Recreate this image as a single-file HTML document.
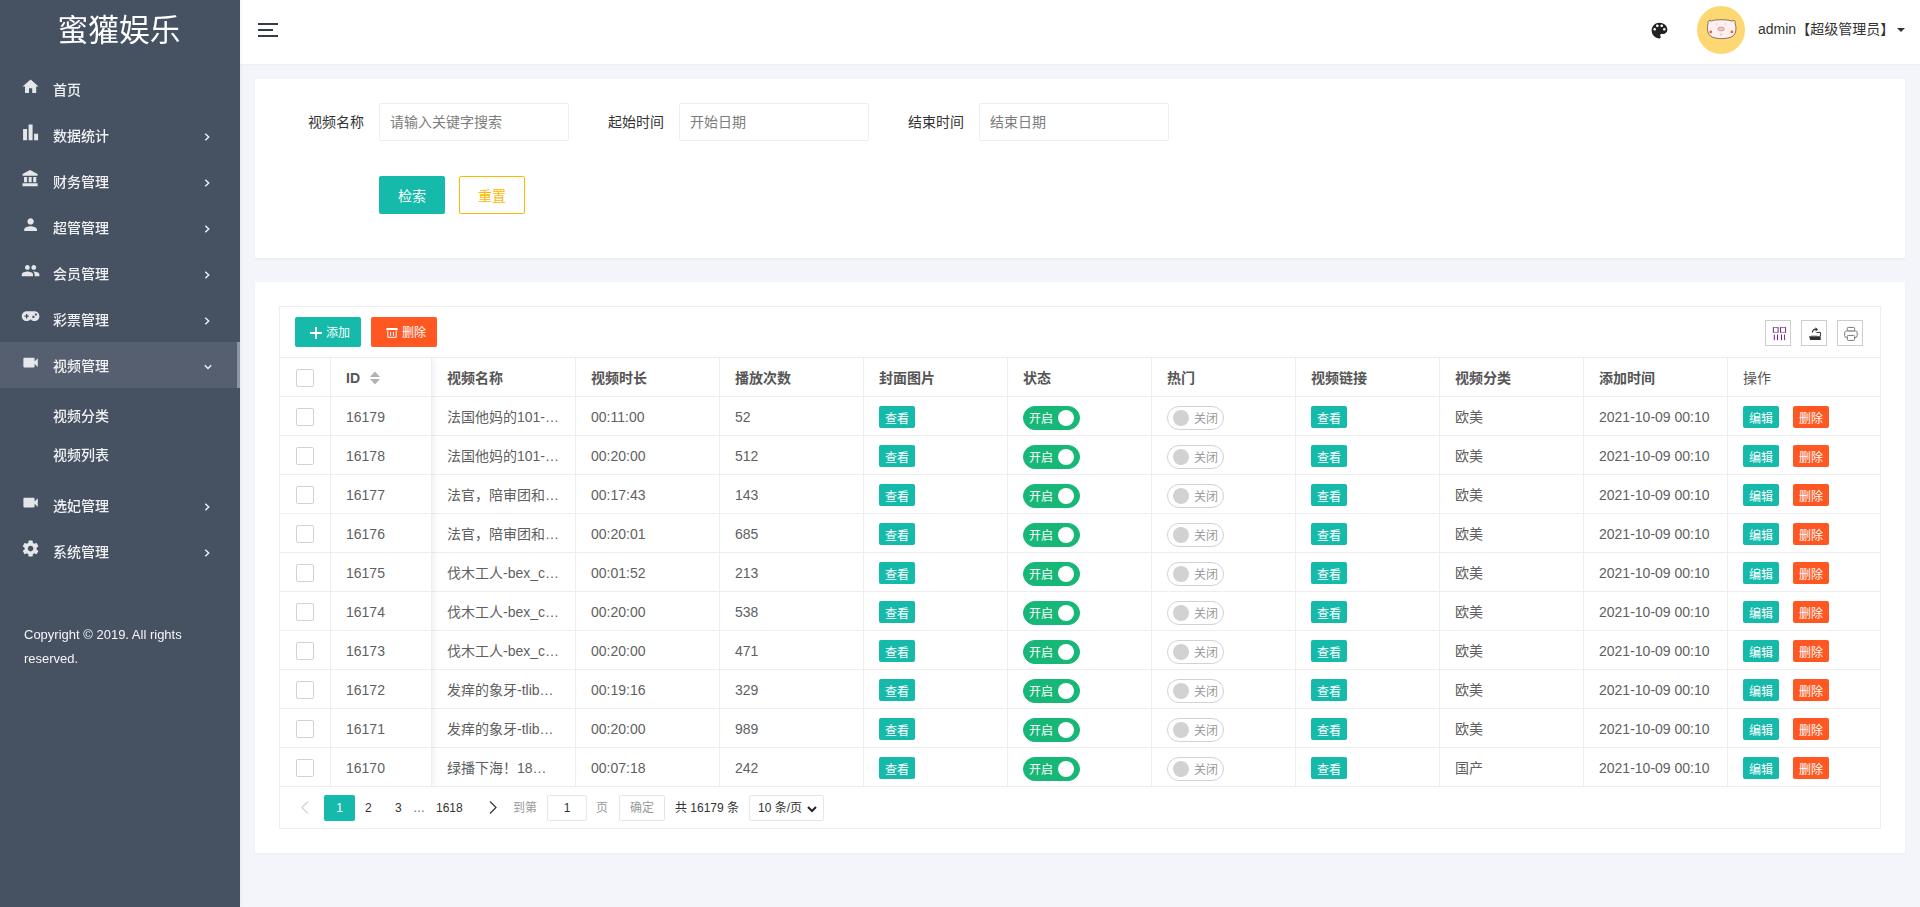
<!DOCTYPE html>
<html lang="zh-CN">
<head>
<meta charset="utf-8">
<title>蜜獾娱乐</title>
<style>
*{box-sizing:border-box;margin:0;padding:0}
html,body{width:1920px;height:907px;overflow:hidden}
body{font-family:"Liberation Sans","Noto Sans CJK SC",sans-serif;font-size:14px;color:#333;background:#f4f5fa;position:relative}
i{font-style:normal}
/* sidebar */
#side{position:absolute;left:0;top:0;width:240px;height:907px;background:#465162;color:#fff;box-shadow:1px 0 4px rgba(0,21,41,.05);z-index:5}
#logo{position:absolute;left:-1px;top:0;width:240px;height:60px;line-height:61px;text-align:center;font-size:30.700px;color:#fff;font-weight:400}
.mi{position:absolute;left:0;width:240px;height:46px;line-height:46px;color:rgba(255,255,255,.92);font-size:14px}
.mi.act{background:#565f6f}
.mi.act:after{content:"";position:absolute;right:0;top:0;width:3px;height:46px;background:#8d95a3}
.mi .tx{position:absolute;left:53px;top:1px;font-weight:500}
#sin{position:absolute;left:0;top:0;width:240px;height:907px;will-change:transform}
.mi svg.ic{position:absolute;left:20.600px;top:10.700px;width:19.200px;height:19.200px;fill:rgba(255,255,255,.86)}
.mi svg.ar{position:absolute;left:203px;top:20.500px;width:8px;height:8px;fill:none;stroke:rgba(255,255,255,.9);stroke-width:1.500}
.mi svg.ar.dn{left:203.500px;top:21px}
.sub{position:absolute;left:53px;height:39px;line-height:39px;color:rgba(255,255,255,.92);font-size:14px;font-weight:500}
#copy{position:absolute;left:24px;top:623px;width:192px;font-size:13px;line-height:24px;color:rgba(255,255,255,.95)}
/* header */
#hd{position:absolute;left:240px;top:0;width:1680px;height:64px;background:#fff;box-shadow:0 1px 3px rgba(0,21,41,.04)}
#burger{position:absolute;left:18px;top:23px;width:20px;height:14px}
#pal{position:absolute;left:1409px;top:19.900px;width:21px;height:21px}
#avatar{position:absolute;left:1457px;top:6px;width:48px;height:48px;border-radius:50%;background:#fdd771;overflow:hidden}
#user{position:absolute;left:1518px;top:0;height:58px;line-height:58px;font-size:14px;color:#333;white-space:nowrap}
#caret{position:absolute;left:1657px;top:28px;width:8px;height:4px}
/* cards */
.card{position:absolute;left:255px;width:1650px;background:#fff;box-shadow:0 1px 2px 0 rgba(0,0,0,.05)}
#c1{top:79px;height:179px}
#c2{top:282px;height:571px}
.lab{position:absolute;top:24px;height:38px;line-height:38px;font-size:14px;color:#333;text-align:right;width:109px}
.inp{position:absolute;top:24px;width:190px;height:38px;border:1px solid #eee;border-radius:2px;line-height:36px;padding-left:10px;color:#7d7d7d;font-size:14px;background:#fff}
.btn{position:absolute;height:38px;line-height:40px;text-align:center;font-size:14px;border-radius:2px}
/* table */
#tb{position:absolute;left:24px;top:24px;width:1602px;height:523px;border:1px solid #eee}
#tool{position:absolute;left:0;top:0;width:1600px;height:51px;border-bottom:1px solid #eee}
.tbtn{position:absolute;top:10px;height:30px;line-height:30px;color:#fff;font-size:12px;border-radius:2px;text-align:center}
.tic{position:absolute;top:13px;width:26px;height:26px;border:1px solid #ccc}
.tic svg{display:block}
table{position:absolute;left:0;top:51px;border-collapse:separate;border-spacing:0;table-layout:fixed;width:1600px}
th,td{height:39px;border-right:1px solid #eee;border-bottom:1px solid #eee;padding:0 15px;text-align:left;font-size:14px;color:#5f5f5f;white-space:nowrap;overflow:hidden;font-weight:400}
th{color:#555;font-weight:700}
th.op{font-weight:400}
th:last-child,td:last-child{border-right:0}
td.c,th.c{padding:0}
.cb{display:block;width:18px;height:18px;border:1px solid #d2d2d2;border-radius:2px;background:#fff;margin:1px auto 0}
.sort{vertical-align:-2px;margin-left:6px}
td.l,th.l{padding-top:2px}
.b{display:inline-block;position:relative;top:1px;width:36px;height:22px;line-height:26px;text-align:center;font-size:12px;color:#fff;border-radius:2px;vertical-align:middle}
.g{background:#16baaa}
.r{background:#ff5722}
.sw{display:inline-block;position:relative;top:2px;height:24px;width:57px;border-radius:12px;vertical-align:middle;font-size:12px;line-height:22px}
.sw.on{background:#16b777;border:1px solid #16b777;color:#fff}
.sw.on i{position:absolute;right:5px;top:3px;width:16px;height:16px;border-radius:50%;background:#fff}
.sw.on span{position:absolute;left:5px;top:1px}
.sw.off{background:#fff;border:1px solid #d2d2d2;color:#999}
.sw.off i{position:absolute;left:5px;top:3px;width:16px;height:16px;border-radius:50%;background:#d2d2d2}
.sw.off span{position:absolute;right:5px;top:1px}
#fxl{position:absolute;left:0;top:51px;width:1600px;height:429px;overflow:hidden;pointer-events:none}
#fxl div{position:absolute;left:0;top:0;width:152px;height:429px;box-shadow:1px 0 8px rgba(0,0,0,.08)}
#pg{position:absolute;left:0;top:480px;width:1600px;height:41px;font-size:12px;color:#333}
#pg span,#pg div{position:absolute;top:8px;height:26px;line-height:26px}

</style>
</head>
<body>
<div id="side"><div id="sin">
<div id="logo">蜜獾娱乐</div>
<div class="mi" style="top:66px"><svg class="ic" viewBox="0 0 24 24"><path d="M10 20v-6h4v6h5v-8h3L12 3 2 12h3v8z"/></svg><span class="tx">首页</span></div>
<div class="mi" style="top:112px"><svg class="ic" viewBox="0 0 24 24"><path d="M2.600 7.500h5v14.100h-5zM9.500 2h5v19.600h-5zM16.400 13.500h5v8.100h-5z"/></svg><span class="tx">数据统计</span><svg class="ar" viewBox="0 0 8 8"><path d="M2.300.800l3.400 3.200-3.400 3.200"/></svg></div>
<div class="mi" style="top:158px"><svg class="ic" viewBox="0 0 24 24"><path d="M11.300 1.200L1.900 6.200v2.300h18.900V6.200zM3.800 10.100h3.800v6.500H3.800zM9.600 10.100h3.700v6.500H9.600zM15.300 10.100h3.800v6.500h-3.800zM1.900 17.900h18.900v3.700H1.900z"/></svg><span class="tx">财务管理</span><svg class="ar" viewBox="0 0 8 8"><path d="M2.300.800l3.400 3.200-3.400 3.200"/></svg></div>
<div class="mi" style="top:204px"><svg class="ic" viewBox="0 0 24 24"><path d="M12 12c2.210 0 4-1.790 4-4s-1.790-4-4-4-4 1.790-4 4 1.790 4 4 4zm0 2c-2.670 0-8 1.340-8 4v2h16v-2c0-2.660-5.330-4-8-4z"/></svg><span class="tx">超管管理</span><svg class="ar" viewBox="0 0 8 8"><path d="M2.300.800l3.400 3.200-3.400 3.200"/></svg></div>
<div class="mi" style="top:250px"><svg class="ic" viewBox="0 0 24 24"><path d="M16 11c1.660 0 2.990-1.340 2.990-3S17.660 5 16 5c-1.660 0-3 1.340-3 3s1.340 3 3 3zm-8 0c1.660 0 2.990-1.340 2.990-3S9.660 5 8 5C6.340 5 5 6.340 5 8s1.340 3 3 3zm0 2c-2.330 0-7 1.170-7 3.500V19h14v-2.500c0-2.330-4.670-3.500-7-3.500zm8 0c-.290 0-.620.020-.970.050 1.160.840 1.970 1.970 1.970 3.450V19h6v-2.500c0-2.330-4.670-3.500-7-3.500z"/></svg><span class="tx">会员管理</span><svg class="ar" viewBox="0 0 8 8"><path d="M2.300.800l3.400 3.200-3.400 3.200"/></svg></div>
<div class="mi" style="top:296px"><svg class="ic" viewBox="0 0 24 24"><g transform="translate(12 11.500) scale(1.100) translate(-12 -11.500)"><path d="M16.500 6h-9C4.460 6 2 8.460 2 11.500S4.460 17 7.500 17c1.600 0 3.040-.690 4.040-1.780h.920c1 1.090 2.440 1.780 4.040 1.780 3.040 0 5.500-2.460 5.500-5.500S19.540 6 16.500 6zM10 12.250H8.250V14h-1.500v-1.750H5v-1.500h1.750V9h1.500v1.750H10v1.500zm5.200 1.450c-.720 0-1.300-.580-1.300-1.300s.580-1.300 1.300-1.300 1.300.580 1.300 1.300-.580 1.300-1.300 1.300zm2.800-2.800c-.720 0-1.300-.580-1.300-1.300s.580-1.300 1.300-1.300 1.300.580 1.300 1.300-.580 1.300-1.300 1.300z" fill-rule="evenodd"/></g></svg><span class="tx">彩票管理</span><svg class="ar" viewBox="0 0 8 8"><path d="M2.300.800l3.400 3.200-3.400 3.200"/></svg></div>
<div class="mi act" style="top:342px"><svg class="ic" viewBox="0 0 24 24"><path d="M17 10.500V7c0-.550-.450-1-1-1H4c-.550 0-1 .450-1 1v10c0 .550.450 1 1 1h12c.550 0 1-.450 1-1v-3.500l4 4v-11l-4 4z"/></svg><span class="tx">视频管理</span><svg class="ar dn" viewBox="0 0 8 8"><path d="M.800 2.300l3.200 3.200 3.200-3.200"/></svg></div>
<div class="mi" style="top:482px"><svg class="ic" viewBox="0 0 24 24"><path d="M17 10.500V7c0-.550-.450-1-1-1H4c-.550 0-1 .450-1 1v10c0 .550.450 1 1 1h12c.550 0 1-.450 1-1v-3.500l4 4v-11l-4 4z"/></svg><span class="tx">选妃管理</span><svg class="ar" viewBox="0 0 8 8"><path d="M2.300.800l3.400 3.200-3.400 3.200"/></svg></div>
<div class="mi" style="top:528px"><svg class="ic" viewBox="0 0 24 24"><path d="M19.430 12.980c.040-.320.070-.640.070-.980s-.030-.660-.070-.980l2.110-1.650c.190-.150.240-.420.120-.640l-2-3.460c-.120-.220-.390-.300-.610-.220l-2.490 1c-.520-.400-1.080-.730-1.690-.980l-.380-2.650C14.460 2.180 14.250 2 14 2h-4c-.250 0-.460.180-.490.420l-.380 2.650c-.610.250-1.170.590-1.690.980l-2.490-1c-.230-.090-.490 0-.610.220l-2 3.460c-.130.220-.070.490.120.640l2.110 1.650c-.040.320-.070.650-.070.980s.030.660.070.980l-2.110 1.650c-.190.150-.240.420-.120.640l2 3.460c.120.220.390.300.610.220l2.490-1c.520.400 1.080.730 1.690.980l.380 2.650c.030.240.240.420.490.420h4c.250 0 .460-.180.490-.420l.380-2.650c.610-.250 1.170-.590 1.690-.980l2.490 1c.230.090.490 0 .610-.220l2-3.460c.120-.220.070-.490-.120-.640l-2.110-1.650zM12 15.500c-1.930 0-3.500-1.570-3.500-3.500s1.570-3.500 3.500-3.500 3.500 1.570 3.500 3.500-1.570 3.500-3.500 3.500z"/></svg><span class="tx">系统管理</span><svg class="ar" viewBox="0 0 8 8"><path d="M2.300.800l3.400 3.200-3.400 3.200"/></svg></div>
<div class="sub" style="top:397px">视频分类</div>
<div class="sub" style="top:436px">视频列表</div>
<div id="copy">Copyright © 2019. All rights reserved.</div>
</div></div>
<div id="hd">
<svg id="burger" viewBox="0 0 20 14"><path d="M0 0h20v2H0zM0 6h15v2H0zM0 12h20v2H0z" fill="#333c4a"/></svg>
<svg id="pal" viewBox="0 0 24 24"><path fill="#222" fill-rule="evenodd" d="M12 3c-4.970 0-9 4.030-9 9s4.030 9 9 9c.830 0 1.500-.670 1.500-1.500 0-.390-.150-.740-.390-1.010-.230-.260-.380-.610-.380-.990 0-.830.670-1.500 1.500-1.500H16c2.760 0 5-2.240 5-5 0-4.420-4.030-8-9-8zm-5.500 9c-.830 0-1.500-.670-1.500-1.500S5.670 9 6.500 9 8 9.670 8 10.500 7.330 12 6.500 12zm3-4C8.670 8 8 7.330 8 6.500S8.670 5 9.500 5s1.500.670 1.500 1.500S10.330 8 9.500 8zm5 0c-.830 0-1.500-.670-1.500-1.500S13.670 5 14.500 5s1.500.670 1.500 1.500S15.330 8 14.500 8zm3 4c-.830 0-1.500-.670-1.500-1.500S16.670 9 17.500 9s1.500.670 1.500 1.500-.670 1.500-1.500 1.500z"/></svg>
<div id="avatar"><svg viewBox="0 0 48 48" width="48" height="48">
<path d="M11.200 17.500C10.200 15 12.500 13.600 14.500 15 18 13.300 30.500 13.300 34.800 15 36.800 13.600 39.300 15 38 17.500 39.500 21 39.500 27 36 30 31 33.500 18 33.500 13.500 30 10 27 9.800 21 11.200 17.500z" fill="#fdf0ee" stroke="#33282a" stroke-width=".600"/>
<path d="M12 16.200q.8-1 1.800-.4M36.800 16.200q-.8-1-1.800-.4" stroke="#f3b6b6" stroke-width=".8" fill="none"/>
<ellipse cx="24.100" cy="23" rx="3.300" ry="1.900" fill="#f7c3c4" stroke="#8a5a5a" stroke-width=".4"/>
<circle cx="13.800" cy="25.900" r="1.400" fill="#ff5a2a"/><circle cx="34.900" cy="25.900" r="1.400" fill="#ff5a2a"/>
<path d="M19.500 17.500v1M28.400 17.500v1" stroke="#6a5a5a" stroke-width=".4" fill="none"/>
<path d="M23.800 27.600q1 .9 .2 1.900" stroke="#6a5a5a" stroke-width=".5" fill="none"/>
</svg></div>
<div id="user">admin【超级管理员】</div>
<svg id="caret" viewBox="0 0 10 5"><path d="M0 0h10L5 5z" fill="#333"/></svg>
</div>
<div class="card" id="c1">
<div class="lab" style="left:0">视频名称</div><div class="inp" style="left:124px">请输入关键字搜索</div>
<div class="lab" style="left:300px">起始时间</div><div class="inp" style="left:424px">开始日期</div>
<div class="lab" style="left:600px">结束时间</div><div class="inp" style="left:724px">结束日期</div>
<div class="btn" style="left:124px;top:97px;width:66px;background:#16baaa;color:#fff">检索</div>
<div class="btn" style="left:204px;top:97px;width:66px;border:1px solid #ffb800;color:#ffb800;line-height:38px;background:#fff">重置</div>
</div>
<div class="card" id="c2"><div id="tb">
<div id="tool">
<div class="tbtn g" style="left:15px;width:66px"><svg viewBox="0 0 12 12" width="12" height="12" style="position:absolute;left:15px;top:10px"><path d="M5 0h2v5h5v2H7v5H5V7H0V5h5z" fill="#fff"/></svg><span style="position:absolute;left:31px;top:1px">添加</span></div>
<div class="tbtn r" style="left:91px;width:66px"><svg viewBox="0 0 12 10" width="12" height="10" style="position:absolute;left:15px;top:11px"><path d="M.600 0h10.800l.6 2.100H0z" fill="#fff"/><path d="M1.800 2.500v6.800h8.400V2.500M4.600 3.800v4M7.400 3.800v4" fill="none" stroke="#fff" stroke-width="1"/></svg><span style="position:absolute;left:31px;top:1px">删除</span></div>
<div class="tic" style="left:1485px"><svg viewBox="0 0 24 24" width="24" height="24"><g fill="none" stroke="#8a8a8a" stroke-width="1"><path d="M7.400 6.500h4.700M7.400 11.300h4.700M14.500 6.500h5.100M14.500 11.300h5.100"/></g><g fill="none" stroke="#7d1f8c" stroke-width="1"><path d="M7.400 6.200v5.400M12.100 6.200v5.400M14.500 6.200v5.400M19.600 6.200v5.400M8.300 13.500v5.700M11.500 13.500v5.700M15.500 13.500v5.700M18.600 13.500v5.700"/></g></svg></div>
<div class="tic" style="left:1521px"><svg viewBox="0 0 24 24" width="24" height="24"><path d="M7 15.200h11.700v3.700H8.200z" fill="#2e2e2e"/><path d="M9 14.500h6" stroke="#bbb" stroke-width=".8"/><path d="M14.400 11.400h4v3.800" fill="none" stroke="#333" stroke-width="1"/><path d="M10.500 11.600c0-2.400 1.400-3.400 3.400-3.400" fill="none" stroke="#333" stroke-width="1.200"/><path d="M13.500 6.200l2.600 2.200-2.600 2z" fill="#333"/></svg></div>
<div class="tic" style="left:1557px"><svg viewBox="0 0 24 24" width="24" height="24"><g fill="none" stroke="#777" stroke-width="1"><rect x="6.700" y="9.900" width="12.500" height="6.600" rx="2"/><rect x="9.300" y="6.400" width="7.300" height="3.500" rx="1" fill="#fff"/><rect x="9.300" y="14.400" width="7.300" height="5" rx="1" fill="#fff"/></g></svg></div>
</div>
<table>
<colgroup><col style="width:51px"><col style="width:101px"><col style="width:144px"><col style="width:144px"><col style="width:144px"><col style="width:144px"><col style="width:144px"><col style="width:144px"><col style="width:144px"><col style="width:144px"><col style="width:144px"><col style="width:152px"></colgroup>
<tr><th class="c"><i class="cb"></i></th><th class="fx l">ID <svg class="sort" viewBox="0 0 10 14" width="10" height="14"><path d="M0 6l5-5.500L10 6z" fill="#b2b2b2"/><path d="M0 8l5 5.500L10 8z" fill="#b2b2b2"/></svg></th><th>视频名称</th><th>视频时长</th><th>播放次数</th><th>封面图片</th><th>状态</th><th>热门</th><th>视频链接</th><th>视频分类</th><th>添加时间</th><th class="op">操作</th></tr>
<tr><td class="c"><i class="cb"></i></td><td class="fx l">16179</td><td>法国他妈的101-…</td><td class="l">00:11:00</td><td class="l">52</td><td><span class="b g">查看</span></td><td><span class="sw on"><span>开启</span><i></i></span></td><td><span class="sw off"><i></i><span>关闭</span></span></td><td><span class="b g">查看</span></td><td>欧美</td><td class="l">2021-10-09 00:10</td><td class="op"><span class="b g">编辑</span><span class="b r" style="margin-left:14px">删除</span></td></tr>
<tr><td class="c"><i class="cb"></i></td><td class="fx l">16178</td><td>法国他妈的101-…</td><td class="l">00:20:00</td><td class="l">512</td><td><span class="b g">查看</span></td><td><span class="sw on"><span>开启</span><i></i></span></td><td><span class="sw off"><i></i><span>关闭</span></span></td><td><span class="b g">查看</span></td><td>欧美</td><td class="l">2021-10-09 00:10</td><td class="op"><span class="b g">编辑</span><span class="b r" style="margin-left:14px">删除</span></td></tr>
<tr><td class="c"><i class="cb"></i></td><td class="fx l">16177</td><td>法官，陪审团和…</td><td class="l">00:17:43</td><td class="l">143</td><td><span class="b g">查看</span></td><td><span class="sw on"><span>开启</span><i></i></span></td><td><span class="sw off"><i></i><span>关闭</span></span></td><td><span class="b g">查看</span></td><td>欧美</td><td class="l">2021-10-09 00:10</td><td class="op"><span class="b g">编辑</span><span class="b r" style="margin-left:14px">删除</span></td></tr>
<tr><td class="c"><i class="cb"></i></td><td class="fx l">16176</td><td>法官，陪审团和…</td><td class="l">00:20:01</td><td class="l">685</td><td><span class="b g">查看</span></td><td><span class="sw on"><span>开启</span><i></i></span></td><td><span class="sw off"><i></i><span>关闭</span></span></td><td><span class="b g">查看</span></td><td>欧美</td><td class="l">2021-10-09 00:10</td><td class="op"><span class="b g">编辑</span><span class="b r" style="margin-left:14px">删除</span></td></tr>
<tr><td class="c"><i class="cb"></i></td><td class="fx l">16175</td><td>伐木工人-bex_c…</td><td class="l">00:01:52</td><td class="l">213</td><td><span class="b g">查看</span></td><td><span class="sw on"><span>开启</span><i></i></span></td><td><span class="sw off"><i></i><span>关闭</span></span></td><td><span class="b g">查看</span></td><td>欧美</td><td class="l">2021-10-09 00:10</td><td class="op"><span class="b g">编辑</span><span class="b r" style="margin-left:14px">删除</span></td></tr>
<tr><td class="c"><i class="cb"></i></td><td class="fx l">16174</td><td>伐木工人-bex_c…</td><td class="l">00:20:00</td><td class="l">538</td><td><span class="b g">查看</span></td><td><span class="sw on"><span>开启</span><i></i></span></td><td><span class="sw off"><i></i><span>关闭</span></span></td><td><span class="b g">查看</span></td><td>欧美</td><td class="l">2021-10-09 00:10</td><td class="op"><span class="b g">编辑</span><span class="b r" style="margin-left:14px">删除</span></td></tr>
<tr><td class="c"><i class="cb"></i></td><td class="fx l">16173</td><td>伐木工人-bex_c…</td><td class="l">00:20:00</td><td class="l">471</td><td><span class="b g">查看</span></td><td><span class="sw on"><span>开启</span><i></i></span></td><td><span class="sw off"><i></i><span>关闭</span></span></td><td><span class="b g">查看</span></td><td>欧美</td><td class="l">2021-10-09 00:10</td><td class="op"><span class="b g">编辑</span><span class="b r" style="margin-left:14px">删除</span></td></tr>
<tr><td class="c"><i class="cb"></i></td><td class="fx l">16172</td><td>发痒的象牙-tlib…</td><td class="l">00:19:16</td><td class="l">329</td><td><span class="b g">查看</span></td><td><span class="sw on"><span>开启</span><i></i></span></td><td><span class="sw off"><i></i><span>关闭</span></span></td><td><span class="b g">查看</span></td><td>欧美</td><td class="l">2021-10-09 00:10</td><td class="op"><span class="b g">编辑</span><span class="b r" style="margin-left:14px">删除</span></td></tr>
<tr><td class="c"><i class="cb"></i></td><td class="fx l">16171</td><td>发痒的象牙-tlib…</td><td class="l">00:20:00</td><td class="l">989</td><td><span class="b g">查看</span></td><td><span class="sw on"><span>开启</span><i></i></span></td><td><span class="sw off"><i></i><span>关闭</span></span></td><td><span class="b g">查看</span></td><td>欧美</td><td class="l">2021-10-09 00:10</td><td class="op"><span class="b g">编辑</span><span class="b r" style="margin-left:14px">删除</span></td></tr>
<tr><td class="c"><i class="cb"></i></td><td class="fx l">16170</td><td>绿播下海！18…</td><td class="l">00:07:18</td><td class="l">242</td><td><span class="b g">查看</span></td><td><span class="sw on"><span>开启</span><i></i></span></td><td><span class="sw off"><i></i><span>关闭</span></span></td><td><span class="b g">查看</span></td><td>国产</td><td class="l">2021-10-09 00:10</td><td class="op"><span class="b g">编辑</span><span class="b r" style="margin-left:14px">删除</span></td></tr>
</table>
<div id="fxl"><div></div></div>
<div id="pg">
<svg style="position:absolute;left:21px;top:14px" width="8" height="13" viewBox="0 0 8 13"><path d="M7 .500L1 6.500l6 6" fill="none" stroke="#d2d2d2" stroke-width="1.200"/></svg>
<div class="cur" style="left:44px;width:31px;background:#16baaa;color:#fff;text-align:center;border-radius:2px">1</div>
<span style="left:85px">2</span>
<span style="left:115px">3</span>
<span style="left:133px;color:#666">…</span>
<span style="left:156px">1618</span>
<svg style="position:absolute;left:209px;top:14px" width="8" height="13" viewBox="0 0 8 13"><path d="M1 .500l6 6-6 6" fill="none" stroke="#333" stroke-width="1.200"/></svg>
<span style="left:233px;color:#999">到第</span>
<div style="left:267px;width:40px;line-height:24px;border:1px solid #e6e6e6;border-radius:2px;text-align:center">1</div>
<span style="left:316px;color:#999">页</span>
<div style="left:339px;width:46px;line-height:24px;border:1px solid #e6e6e6;border-radius:2px;text-align:center;color:#999">确定</div>
<span style="left:395px">共 16179 条</span>
<div style="left:469px;width:75px;line-height:24px;border:1px solid #e6e6e6;border-radius:2px;padding-left:8px">10 条/页<svg style="position:absolute;right:6px;top:10px" width="10" height="7" viewBox="0 0 10 7"><path d="M1 1l4 4 4-4" fill="none" stroke="#222" stroke-width="2"/></svg></div>
</div>
</div></div>
</body>
</html>
